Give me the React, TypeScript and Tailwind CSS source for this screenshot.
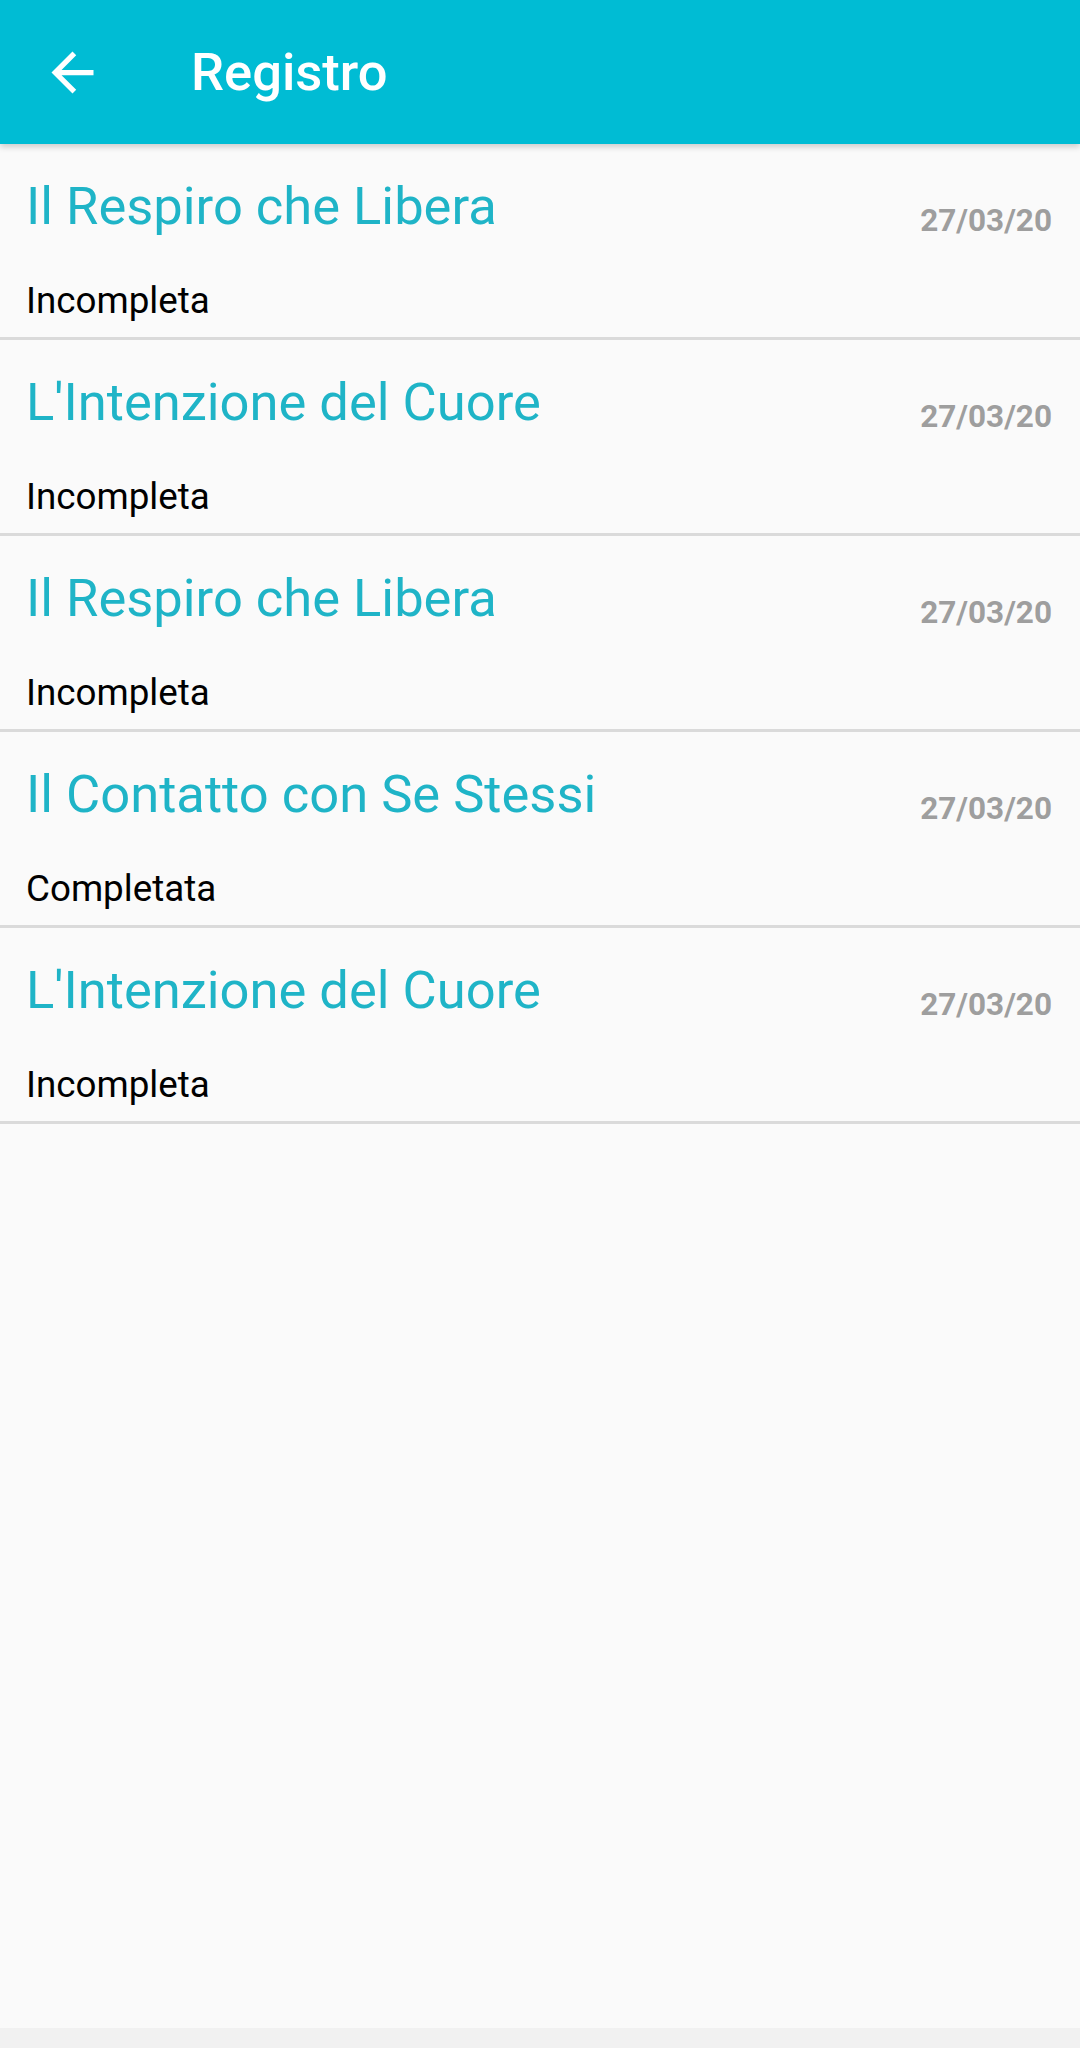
const rows = [
  { title: "Il Respiro che Libera", status: "Incompleta" },
  { title: "L'Intenzione del Cuore", status: "Incompleta" },
  { title: "Il Respiro che Libera", status: "Incompleta" },
  { title: "Il Contatto con Se Stessi", status: "Completata" },
  { title: "L'Intenzione del Cuore", status: "Incompleta" },
];

function BackArrow() {
  return (
    <svg viewBox="0 0 24 24" className="size-[63px]" fill="white">
      <path d="M20 11H7.83l5.59-5.59L12 4l-8 8 8 8 1.41-1.41L7.83 13H20v-2z" />
    </svg>
  );
}

export default function App() {
  return (
    <div className="flex h-[2048px] w-[1080px] flex-col bg-[#fafafa] font-['Roboto',sans-serif]">
      <header className="relative z-10 flex h-[144px] shrink-0 items-center bg-[#00bcd4] pl-[41px] shadow-[0_3px_6px_rgba(0,0,0,0.18)]">
        <BackArrow />
        <h1 className="ml-[87px] text-[52.5px] font-medium leading-none text-white">Registro</h1>
      </header>

      <ul className="flex-1">
        {rows.map((r, i) => (
          <li key={i} className="flex h-[196px] flex-col border-b-[3px] border-[#dadada] pl-[26px] pr-[28px]">
            <div className="mt-[26px] flex items-start justify-between">
              <span className="text-[52.5px] leading-[72px] text-[#1fb4c7]">{r.title}</span>
              <span className="mt-[29px] text-[31.5px] font-bold leading-[44px] text-[#9e9e9e]">27/03/20</span>
            </div>
            <span className="mt-[34px] text-[36.75px] leading-[48px] text-black">{r.status}</span>
          </li>
        ))}
      </ul>

      <div className="h-[20px] shrink-0 bg-[#f1f1f1]" />
    </div>
  );
}
